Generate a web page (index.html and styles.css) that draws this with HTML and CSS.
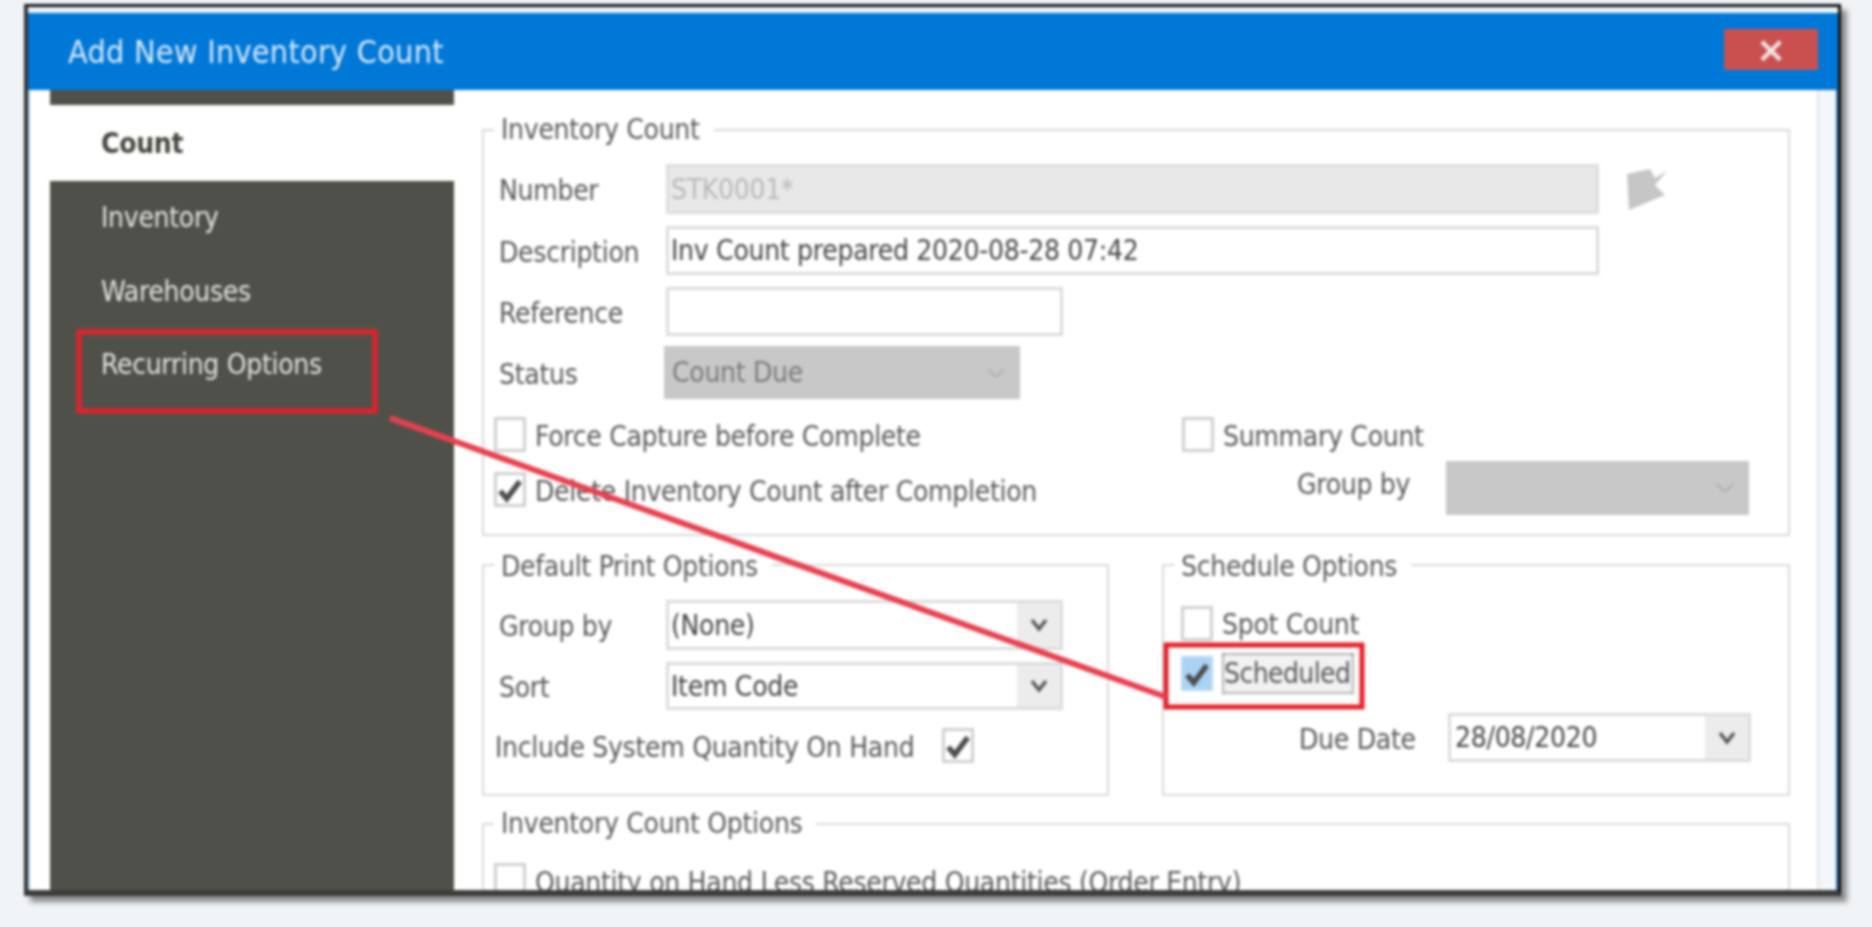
FILE: index.html
```html
<!DOCTYPE html>
<html lang="en">
<head>
<meta charset="utf-8">
<title>Add New Inventory Count</title>
<link rel="stylesheet" href="styles.css">
</head>
<body>
<div class="shot">
  <div class="window">
    <header class="titlebar">
      <h1 class="title">Add New Inventory Count</h1>
      <button class="close" type="button">×</button>
    </header>
    <div class="content">
      <nav class="sidebar">
        <div class="nav-cap"></div>
        <div class="nav-item active">Count</div>
        <div class="nav-item">Inventory</div>
        <div class="nav-item">Warehouses</div>
        <div class="nav-item">Recurring Options</div>
      </nav>
      <main class="main">
        <fieldset class="group">
          <legend>Inventory Count</legend>
          <div class="row row-number">
            <label class="lbl">Number</label>
            <div class="field disabled wide muted">STK0001*</div>
            <svg class="tag-icon" viewBox="0 0 42 42"><path d="M1 6 L24 1 L29 10 L41 3 L29 17 L39 27 L3 42 Z" fill="#c6c6c6"/></svg>
          </div>
          <div class="row row-desc">
            <label class="lbl">Description</label>
            <div class="field wide">Inv Count prepared 2020-08-28 07:42</div>
          </div>
          <div class="row row-ref">
            <label class="lbl">Reference</label>
            <div class="field medium"></div>
          </div>
          <div class="row row-status">
            <label class="lbl lbl-status">Status</label>
            <div class="select-flat status-select">
              <span>Count Due</span>
              <svg class="chev-light" viewBox="0 0 20 12"><path d="M2 2 L10 10 L18 2" fill="none" stroke="#b0b0b0" stroke-width="2"/></svg>
            </div>
          </div>
          <div class="split">
            <div class="split-left">
              <div class="check-row">
                <span class="box"></span><span class="cap">Force Capture before Complete</span>
              </div>
              <div class="check-row second">
                <span class="box"><svg class="tick" viewBox="0 0 24 24"><path d="M3 13 L9 20 L21 4" fill="none" stroke="#4c4c4c" stroke-width="5"/></svg></span><span class="cap">Delete Inventory Count after Completion</span>
              </div>
            </div>
            <div class="split-right">
              <div class="check-row">
                <span class="box"></span><span class="cap">Summary Count</span>
              </div>
              <div class="row row-groupby">
                <label class="lbl lbl-side lbl-raised">Group by</label>
                <div class="select-flat groupby-select">
                  <svg class="chev-light" viewBox="0 0 20 12"><path d="M2 2 L10 10 L18 2" fill="none" stroke="#b0b0b0" stroke-width="2"/></svg>
                </div>
              </div>
            </div>
          </div>
        </fieldset>
        <div class="pair">
          <fieldset class="group half print">
            <legend>Default Print Options</legend>
            <div class="row row-pg">
              <label class="lbl">Group by</label>
              <div class="combo medium"><span class="combo-text">(None)</span><span class="combo-btn"><svg class="chev" viewBox="0 0 20 14"><path d="M3 2 L10 11 L17 2" fill="none" stroke="#555" stroke-width="3.5"/></svg></span></div>
            </div>
            <div class="row row-sort">
              <label class="lbl">Sort</label>
              <div class="combo medium"><span class="combo-text">Item Code</span><span class="combo-btn"><svg class="chev" viewBox="0 0 20 14"><path d="M3 2 L10 11 L17 2" fill="none" stroke="#555" stroke-width="3.5"/></svg></span></div>
            </div>
            <div class="check-row include">
              <span class="cap">Include System Quantity On Hand</span>
              <span class="box"><svg class="tick" viewBox="0 0 24 24"><path d="M3 13 L9 20 L21 4" fill="none" stroke="#4c4c4c" stroke-width="5"/></svg></span>
            </div>
          </fieldset>
          <fieldset class="group half schedule">
            <legend>Schedule Options</legend>
            <div class="check-row spot">
              <span class="box"></span><span class="cap">Spot Count</span>
            </div>
            <div class="check-row scheduled">
              <span class="box on"><svg class="tick" viewBox="0 0 24 24"><path d="M3 13 L9 20 L21 4" fill="none" stroke="#4c4c4c" stroke-width="5"/></svg></span><span class="focused">Scheduled</span>
            </div>
            <div class="row row-due">
              <label class="lbl lbl-side">Due Date</label>
              <div class="combo date"><span class="combo-text">28/08/2020</span><span class="combo-btn"><svg class="chev" viewBox="0 0 20 14"><path d="M3 2 L10 11 L17 2" fill="none" stroke="#555" stroke-width="3.5"/></svg></span></div>
            </div>
          </fieldset>
        </div>
        <fieldset class="group last">
          <legend>Inventory Count Options</legend>
          <div class="check-row">
            <span class="box"></span><span class="cap">Quantity on Hand Less Reserved Quantities (Order Entry)</span>
          </div>
        </fieldset>
      </main>
      <div class="edge"></div>
    </div>
  </div>
  <svg class="annotations" viewBox="0 0 1872 927" width="1872" height="927">
    <rect x="79" y="332" width="296" height="79" fill="none" stroke="#e5202a" stroke-width="5"/>
    <rect x="1166" y="645" width="196" height="62" fill="none" stroke="#e5202a" stroke-width="5"/>
    <path d="M390 418 L1166 697" stroke="#e8404e" stroke-width="6" fill="none"/>
  </svg>
</div>
</body>
</html>
```
FILE: styles.css
```css
* { box-sizing: border-box; }
html, body { margin: 0; height: 100%; overflow: hidden; background: #f1f4f7; }
body {
  font-family: "DejaVu Sans Condensed", "DejaVu Sans", sans-serif;
  font-stretch: condensed;
  font-size: 28px;
  letter-spacing: -0.3px;
  color: #585858;
}
.shot { position: relative; width: 1872px; height: 927px; padding: 4px 0 0 24px; filter: blur(1.4px); }
.window {
  width: 1817px; height: 892px;
  display: flex; flex-direction: column;
  background: #e9f3f9;
  border: 4px solid #111; border-right-width: 3px; border-bottom: 6px solid #3c3c3c; border-top-width: 3px;
  border-left-color: #333;
  padding-top: 6px;
  box-shadow: 6px 6px 5px #8a8a8a;
}
.titlebar {
  height: 77px; flex: none;
  display: flex; align-items: center; justify-content: space-between;
  background: #0078d7; padding: 0 20px 0 40px;
}
.title { margin: 0; font-size: 32px; font-weight: 400; color: #dbe9f7; letter-spacing: 0.3px; }
.close {
  width: 94px; height: 41px; margin-top: -4px; border: 0; padding: 0;
  background: #c9504f; color: #f4e4e4; font: 700 36px/38px "DejaVu Sans", sans-serif;
}
.content { flex: 1; min-height: 0; display: flex; background: #fff; border-left: 2px solid #9ccdf0; border-right: 2px solid #2a7fc8; overflow: hidden; }
.sidebar { width: 404px; margin-left: 20px; flex: none; background: #50504a; color: #e4e4de; }
.nav-cap { height: 15px; }
.nav-item { height: 73.5px; padding-left: 51px; display: flex; align-items: center; }
.nav-item.active { height: 76px; background: #fff; color: #45453f; font-weight: 700; }
.main { flex: 1; min-width: 0; padding: 22px 27px 0 28px; }
.edge { width: 19px; flex: none; background: #f4f7f9; border-left: 2px solid #e2e2e2; }

.group { margin: 0; padding: 0 15px; border: 2px solid #d9d9d9; min-width: 0; }
.group legend { padding: 0 14px 0 7px; margin-left: -5px; line-height: 36px; color: #5a5a5a; background: #fff; }
.row { display: flex; align-items: center; }
.lbl { width: 167px; flex: none; padding-top: 3px; }
.lbl-status { width: 165px; }
.lbl-side { width: 149px; }
.lbl-raised { padding-top: 0; margin-top: -8px; }
.row-number { height: 50px; margin-top: 16px; }
.row-desc { height: 49px; margin-top: 12px; }
.row-ref { height: 49px; margin-top: 12px; }
.row-status { height: 53px; margin-top: 10px; }
.field { height: 100%; border: 3px solid #dcdcdc; padding-left: 2px; display: flex; align-items: center; background: #fff; color: #444; }
.disabled { background: #e8e8e8; border-color: #dedede; }
.muted { color: #b8b8b8; }
.wide { width: 933px; }
.medium { width: 397px; }
.tag-icon { width: 42px; height: 42px; margin-left: 27px; }
.select-flat { height: 100%; background: #c8c8c8; display: flex; align-items: center; justify-content: space-between; padding: 0 14px 0 8px; color: #7a7a7a; }
.status-select { width: 356px; }
.chev-light { width: 20px; height: 12px; }
.split { display: flex; margin-top: 18px; padding-bottom: 19px; }
.split-left { width: 688px; flex: none; margin-left: -5px; }
.split-right { flex: 1; }
.check-row { display: flex; align-items: center; height: 35px; gap: 9px; }
.cap { padding-top: 3px; }
.check-row.second { margin-top: 20px; }
.box { width: 32px; height: 35px; flex: none; border: 3px solid #d0d0d0; background: #fff; display: flex; align-items: center; justify-content: center; }
.tick { width: 26px; height: 26px; }
.row-groupby { height: 54px; margin-top: 9px; margin-left: 115px; }
.groupby-select { width: 303px; justify-content: flex-end; }

.pair { display: flex; gap: 53px; margin-top: 9px; }
.half { flex: none; height: 251px; }
.half legend { padding-top: 4px; }
.print { width: 627px; }
.schedule { width: 628px; padding-left: 17px; }
.schedule legend { margin-left: -7px; }
.row-pg { height: 50px; margin-top: 15px; }
.row-sort { height: 48px; margin-top: 12px; }
.combo { height: 100%; border: 3px solid #dcdcdc; display: flex; align-items: center; justify-content: space-between; background: #fff; color: #444; }
.combo-text { padding-left: 2px; }
.combo-btn { width: 43px; height: 100%; background: #ececec; flex: none; display: flex; align-items: center; justify-content: center; }
.chev { width: 20px; height: 14px; }
.include { margin-top: 18px; margin-left: -4px; gap: 28px; }
.spot { margin-top: 21px; height: 34px; }
.scheduled { margin-top: 16px; height: 35px; }
.box.on { background: #a9d2f3; border-color: #b4d8f5; }
.focused { border: 2px dotted #777; background: #f2f2f2; padding: 2px 2px 2px 0; letter-spacing: -0.6px; }
.row-due { height: 49px; margin-top: 22px; margin-left: 118px; }
.date { width: 303px; }
.date .combo-text { padding-left: 4px; }
.last { margin-top: 10px; height: 200px; }
.last .check-row { margin-top: 21px; margin-left: -5px; height: 35px; }
.annotations { position: absolute; left: 0; top: 0; pointer-events: none; }
```
